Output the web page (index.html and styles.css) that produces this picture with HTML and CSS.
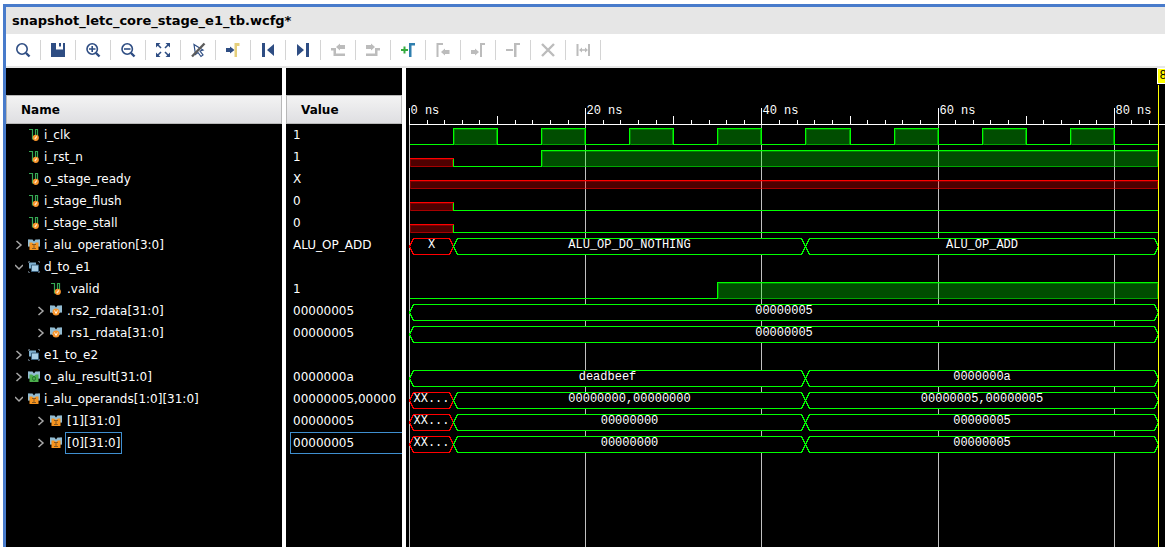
FILE: index.html
```html
<!DOCTYPE html>
<html lang="en">
<head>
    <meta charset="UTF-8">
    <title>snapshot_letc_core_stage_e1_tb.wcfg*</title>
    <link rel="stylesheet" href="styles.css">
</head>
<body>

<svg class="sprite" aria-hidden="true">
    <symbol id="right" viewBox="0 0 8 10"><path d="M1.500 1l4.500 4-4.500 4" fill="none" stroke="#a8a8a8" stroke-width="1.5"/></symbol>
    <symbol id="down" viewBox="0 0 8 10"><path d="M0 3l4 4 4-4" fill="none" stroke="#a8a8a8" stroke-width="1.5"/></symbol>
    <symbol id="wire" viewBox="0 0 12 12">
        <path d="M1 .5h3.500v9.500h2M7.500 8V.5h2V7" fill="none" stroke="#35a853" stroke-width="1.200"/>
        <circle cx="7.800" cy="8.800" r="3.100" fill="#f9952b"/>
        <path d="M6.800 10.200l2-2.800" stroke="#ffe9cc" stroke-width="1.200"/>
    </symbol>
    <symbol id="bus" viewBox="0 0 12 12">
        <path d="M0 .5h4.500l1.500 2 1.500-2H12V8H0z" fill="#93bcd2"/>
        <path d="M0 .5h2M10 .5h2M0 7.500h2M10 7.500h2" stroke="#56707e"/>
    </symbol>
    <symbol id="bus-in" viewBox="0 0 12 12">
        <use href="#bus"/>
        <path d="M1.500 3.500H4l2 1.500 2-1.500h2.500v7.500h-9z" fill="#f7941e"/>
        <path d="M4 5.500h4M6 5.500v4M4 9.500h4" stroke="#8a5a20" fill="none"/>
    </symbol>
    <symbol id="bus-out" viewBox="0 0 12 12">
        <use href="#bus"/>
        <path d="M1.500 3.500H4l2 1.500 2-1.500h2.500v7.500h-9z" fill="#4cae4c"/>
        <ellipse cx="6" cy="7.500" rx="1.500" ry="2" stroke="#1f6e2c" fill="none"/>
    </symbol>
    <symbol id="bus-var" viewBox="0 0 12 12">
        <use href="#bus"/>
        <circle cx="6" cy="7" r="3.500" fill="#f9952b"/>
        <path d="M4.500 5.500L6 8.500l1.500-3" stroke="#fff0dc" fill="none"/>
    </symbol>
    <symbol id="group" viewBox="0 0 12 12">
        <path d="M.5 2V.5H2M10 .5h1.500V2M.5 10v1.500H2M10 11.500h1.500V10" fill="none" stroke="#55606a"/>
        <path d="M1 1.500h7v6H1z" fill="#7fb0cf"/>
        <path d="M3.500 4h7v6.500h-7z" fill="#a9cfe6" stroke="#3d6482"/>
    </symbol>
</svg>

<div class="window">
    <h1 class="title">snapshot_letc_core_stage_e1_tb.wcfg*</h1>

    <div class="toolbar">
        <button class="tool" aria-label="Search"><svg viewBox="0 0 16 16"><circle cx="7" cy="7" r="5.200" class="line"/><path d="M11 11l3.500 3.500" class="line thick"/></svg></button>
        <button class="tool" aria-label="Save"><svg viewBox="0 0 16 16"><path d="M1 1h5v6.500h7V1h2v14H1z"/><path d="M9 1h2v3.500H9z"/></svg></button>
        <button class="tool" aria-label="Zoom in"><svg viewBox="0 0 16 16"><circle cx="7.200" cy="7" r="5.200" class="line"/><path d="M11 11l3.500 3.500" class="line thick"/><path d="M4 7h6.500M7.200 4v6" class="line"/></svg></button>
        <button class="tool" aria-label="Zoom out"><svg viewBox="0 0 16 16"><circle cx="7.200" cy="7" r="5.200" class="line"/><path d="M11 11l3.500 3.500" class="line thick"/><path d="M4 7h6.500" class="line"/></svg></button>
        <button class="tool" aria-label="Zoom fit"><svg viewBox="0 0 16 16"><path d="M1 1h4.500L1 5.500zM15 1v4.500L10.500 1zM1 15v-4.500L5.500 15zM15 15h-4.500l4.500-4.500z"/><path d="M2 2l4 4M14 2l-4 4M2 14l4-4M14 14l-4-4" class="line"/></svg></button>
        <button class="tool" aria-label="Toggle cursor"><svg viewBox="0 0 16 16"><path d="M4 2.500l9 5.500-3 1 3 4-2 1.500-3-4-2.500 2z" class="line thin"/><path d="M2 14.500L14.500 1.500" stroke="#5c5c5c" stroke-width="2.400"/></svg></button>
        <button class="tool" aria-label="Go to cursor"><svg viewBox="0 0 16 16"><path d="M1 6h4V4.500l4.500 3.500L5 11.500V10H1z"/><path d="M9.500 15V1h5v3H12v11z" fill="#e5cf7c"/></svg></button>
        <button class="tool" aria-label="Go to start"><svg viewBox="0 0 16 16"><path d="M2 1h3v14H2zM14 2v12L7 8z"/></svg></button>
        <button class="tool" aria-label="Go to end"><svg viewBox="0 0 16 16"><path d="M11 1h3v14h-3zM2 2v12l7-6z"/></svg></button>
        <button class="tool" aria-label="Previous transition" disabled><svg viewBox="0 0 16 16"><path d="M1 6h5v5.500h9V14H3.500V8.500H1z"/><path d="M6 5l4-3.500V3h5v4h-5v1.500z"/></svg></button>
        <button class="tool" aria-label="Next transition" disabled><svg viewBox="0 0 16 16"><path d="M15 6h-5v5.500H1V14h11.500V8.500H15z"/><path d="M10 5L6 1.500V3H1v4h5v1.500z"/></svg></button>
        <button class="tool" aria-label="Add marker"><svg viewBox="0 0 16 16"><path d="M1 8h7M4.500 4.500v7" stroke="#35ab3f" stroke-width="2"/><path d="M9 15V1h6v2.500h-3.500V15z" fill="#2f7fae"/></svg></button>
        <button class="tool" aria-label="Previous marker" disabled><svg viewBox="0 0 16 16"><path d="M1.500 15V1H8v2H3.500v12zM6 10l4-3.500V8h4.500v4H10v1.500z"/></svg></button>
        <button class="tool" aria-label="Next marker" disabled><svg viewBox="0 0 16 16"><path d="M10 15V1h5v2h-3v12zM9 10L5 6.500V8H1v4h4v1.500z"/></svg></button>
        <button class="tool" aria-label="Remove marker" disabled><svg viewBox="0 0 16 16"><path d="M9 15V1h6v2h-3.500v12zM1 7h7v2H1z"/></svg></button>
        <button class="tool" aria-label="Delete" disabled><svg viewBox="0 0 16 16"><path d="M2 2l12 12M14 2L2 14" class="line thick"/></svg></button>
        <button class="tool" aria-label="Swap cursors" disabled><svg viewBox="0 0 16 16"><path d="M1.500 2h2v12h-2zM13 2h2v12h-2zM4 8l3-2.500V7.300h3V5.500L13 8l-3 2.500V8.700H7v1.800z"/></svg></button>
    </div>

    <main class="panes">
        <section class="pane names">
            <table>
                <tr><th>Name</th></tr>
                <tr><td><div class="node"><i class="gap"></i><svg class="kind"><use href="#wire"/></svg><span>i_clk</span></div></td></tr>
                <tr><td><div class="node"><i class="gap"></i><svg class="kind"><use href="#wire"/></svg><span>i_rst_n</span></div></td></tr>
                <tr><td><div class="node"><i class="gap"></i><svg class="kind"><use href="#wire"/></svg><span>o_stage_ready</span></div></td></tr>
                <tr><td><div class="node"><i class="gap"></i><svg class="kind"><use href="#wire"/></svg><span>i_stage_flush</span></div></td></tr>
                <tr><td><div class="node"><i class="gap"></i><svg class="kind"><use href="#wire"/></svg><span>i_stage_stall</span></div></td></tr>
                <tr><td><div class="node"><button class="gap" aria-label="Expand"><svg><use href="#right"/></svg></button><svg class="kind"><use href="#bus-in"/></svg><span>i_alu_operation[3:0]</span></div></td></tr>
                <tr><td><div class="node"><button class="gap" aria-label="Collapse"><svg><use href="#down"/></svg></button><svg class="kind"><use href="#group"/></svg><span>d_to_e1</span></div></td></tr>
                <tr><td><div class="node child"><i class="gap"></i><svg class="kind"><use href="#wire"/></svg><span>.valid</span></div></td></tr>
                <tr><td><div class="node child"><button class="gap" aria-label="Expand"><svg><use href="#right"/></svg></button><svg class="kind"><use href="#bus-var"/></svg><span>.rs2_rdata[31:0]</span></div></td></tr>
                <tr><td><div class="node child"><button class="gap" aria-label="Expand"><svg><use href="#right"/></svg></button><svg class="kind"><use href="#bus-var"/></svg><span>.rs1_rdata[31:0]</span></div></td></tr>
                <tr><td><div class="node"><button class="gap" aria-label="Expand"><svg><use href="#right"/></svg></button><svg class="kind"><use href="#group"/></svg><span>e1_to_e2</span></div></td></tr>
                <tr><td><div class="node"><button class="gap" aria-label="Expand"><svg><use href="#right"/></svg></button><svg class="kind"><use href="#bus-out"/></svg><span>o_alu_result[31:0]</span></div></td></tr>
                <tr><td><div class="node"><button class="gap" aria-label="Collapse"><svg><use href="#down"/></svg></button><svg class="kind"><use href="#bus-in"/></svg><span>i_alu_operands[1:0][31:0]</span></div></td></tr>
                <tr><td><div class="node child"><button class="gap" aria-label="Expand"><svg><use href="#right"/></svg></button><svg class="kind"><use href="#bus-in"/></svg><span>[1][31:0]</span></div></td></tr>
                <tr><td><div class="node child"><button class="gap" aria-label="Expand"><svg><use href="#right"/></svg></button><svg class="kind"><use href="#bus-in"/></svg><span class="selected">[0][31:0]</span></div></td></tr>
            </table>
        </section>

        <section class="pane values">
            <table>
                <tr><th>Value</th></tr>
                <tr><td><div class="value">1</div></td></tr>
                <tr><td><div class="value">1</div></td></tr>
                <tr><td><div class="value">X</div></td></tr>
                <tr><td><div class="value">0</div></td></tr>
                <tr><td><div class="value">0</div></td></tr>
                <tr><td><div class="value">ALU_OP_ADD</div></td></tr>
                <tr><td><div class="value"></div></td></tr>
                <tr><td><div class="value">1</div></td></tr>
                <tr><td><div class="value">00000005</div></td></tr>
                <tr><td><div class="value">00000005</div></td></tr>
                <tr><td><div class="value"></div></td></tr>
                <tr><td><div class="value">0000000a</div></td></tr>
                <tr><td><div class="value">00000005,00000</div></td></tr>
                <tr><td><div class="value">00000005</div></td></tr>
                <tr><td><div class="value selected">00000005</div></td></tr>
            </table>
        </section>

        <section class="pane wave">
            <svg id="wave"></svg>
        </section>
    </main>
</div>

<script src="wave.js"></script>
</body>
</html>
```
FILE: styles.css
```css
* {
    box-sizing: border-box;
}

html, body {
    height: 100%;
    margin: 0;
}

body {
    background: #fff;
    color: #fff;
    font-family: "DejaVu Sans", sans-serif;
    font-size: 12px;
    padding: 4px 0 0 3px;
    overflow: hidden;
}

.sprite {
    position: absolute;
    width: 0;
    height: 0;
}

.window {
    height: 100%;
    display: flex;
    flex-direction: column;
    border-top: 3px solid #487bcb;
    border-left: 3px solid #487bcb;
}

.title {
    margin: 0;
    padding: 0 6px;
    background: #e6e6e6;
    color: #000;
    font-size: 13px;
    line-height: 27px;
}

/* toolbar */

.toolbar {
    display: flex;
    padding: 6px 0;
    background: #fff;
    border-bottom: 2px solid #e6e6e6;
}

.tool {
    display: flex;
    align-items: center;
    justify-content: center;
    width: 35px;
    height: 20px;
    padding: 0;
    border: none;
    border-right: 1px solid #d4d4d4;
    background: none;
    color: #2e4d83;
}

.tool:disabled {
    color: #bcbcbc;
}

.tool svg {
    width: 16px;
    height: 16px;
    fill: currentColor;
}

.tool .line {
    fill: none;
    stroke: currentColor;
    stroke-width: 1.6;
}

.tool .thick {
    stroke-width: 2.4;
}

.tool .thin {
    stroke-width: 1.2;
}

/* panes */

.panes {
    flex: 1;
    min-height: 0;
    display: flex;
    gap: 4px;
}

.pane {
    background: #000;
    overflow: hidden;
}

.names {
    width: 276px;
    padding-top: 27px;
}

.values {
    width: 116px;
    padding-top: 27px;
}

.wave {
    flex: 1;
    min-width: 0;
}

table {
    width: 100%;
    table-layout: fixed;
    border-collapse: separate;
    border-spacing: 0;
}

th {
    height: 29px;
    padding: 0 14px;
    border: 1px solid #b8b8b8;
    background: linear-gradient(#f3f3f3, #dfdfe2);
    color: #000;
    text-align: left;
}

td {
    height: 22px;
    padding: 0;
}

.node {
    display: flex;
    align-items: center;
    height: 22px;
    padding-left: 7px;
}

.child {
    padding-left: 29px;
}

.gap {
    display: flex;
    width: 12px;
    height: 12px;
    padding: 0;
    border: none;
    background: none;
}

.gap svg {
    width: 8px;
    height: 10px;
    margin: auto;
}

.kind {
    width: 12px;
    height: 12px;
    margin: 0 2px 0 3px;
}

.node span {
    height: 22px;
    line-height: 21px;
    padding: 0 1px;
    border: 1px solid transparent;
}

.child span {
    margin-left: 1px;
}

.value {
    height: 22px;
    margin-left: 4px;
    padding-left: 2px;
    border: 1px solid transparent;
    border-right: none;
    line-height: 21px;
    white-space: nowrap;
}

.node .selected, .value.selected {
    border-color: #3f8fd0;
}

/* waveform */

#wave {
    display: block;
    width: 100%;
    height: 100%;
    font-family: "Liberation Mono", monospace;
    font-size: 12px;
    fill: #fff;
}

#wave path, #wave rect {
    shape-rendering: crispEdges;
}

.axis {
    stroke: #fff;
    fill: none;
}

.grid {
    stroke: #c0c0c0;
}

.one, .unknown {
    fill-opacity: .3;
    stroke-opacity: .5;
}

.one {
    fill: #0f0;
    stroke: #0f0;
}

.unknown {
    fill: #f00;
    stroke: #f00;
}

.level {
    fill: none;
    stroke: #0f0;
}

.level.bad {
    stroke: #f00;
}

.bus {
    fill: #000;
    stroke: #0f0;
}

.bus.bad {
    stroke: #f00;
}

.bus-text {
    text-anchor: middle;
}

.cursor {
    stroke: #ff0;
}

.flag {
    fill: #ff0;
    stroke: #fff;
}

.flag-text {
    fill: #000;
}
```
FILE: wave.js
```js
const svg = document.getElementById('wave');
const NS = 8.81;      // pixels per ns
const LEFT = 3;
const AXIS = 56;
const ROW = 22;
const END = 85;

let out = '';

function px(t) {
    return Math.round(LEFT + t * NS) + 0.5;
}

function path(cls, d) {
    out += `<path class="${cls}" d="${d}"/>`;
}

function drawGrid() {
    path('axis', `M${LEFT} ${AXIS + 0.5}H4000`);
    for (let t = 0; t <= 400; t += 2) {
        const x = px(t);
        let top = AXIS - 4;
        if (t % 10 === 0) top = AXIS - 8;
        if (t % 20 === 0) top = AXIS - 16;
        path('axis', `M${x} ${top}V${AXIS}`);
        if (t % 20 === 0 && t <= END) {
            path('grid', `M${x} ${AXIS + 1}V4000`);
            out += `<text x="${x + 1}" y="${AXIS - 10}">${t} ns</text>`;
        }
    }
}

// segments are [start, value], value is 0, 1 or 'x'
function drawBit(row, segments) {
    const y = AXIS + row * ROW;
    const low = y + 20.5;
    let last = null;
    segments.forEach(([start, v], i) => {
        const a = px(start);
        const b = px(i + 1 < segments.length ? segments[i + 1][0] : END);
        const top = v === 1 ? y + 4.5 : v === 'x' ? y + 12.5 : low;
        if (v !== 0) {
            out += `<rect class="${v === 1 ? 'one' : 'unknown'}" x="${a + 1}" y="${top + 1}" width="${b - a - 2}" height="${low - top - 1}"/>`;
        }
        path(v === 'x' ? 'level bad' : 'level', `M${a} ${last === null ? top : last}V${top}H${b}`);
        last = top;
    });
}

// segments are [start, text]
function drawBus(row, segments) {
    const y = AXIS + row * ROW;
    const top = y + 4.5, mid = y + 12.5, low = y + 20.5;
    segments.forEach(([start, text], i) => {
        const a = px(start);
        const b = px(i + 1 < segments.length ? segments[i + 1][0] : END);
        const bad = text[0] === 'X' ? ' bad' : '';
        path('bus' + bad, `M${a} ${mid}L${a + 4} ${top}H${b - 4}L${b} ${mid}L${b - 4} ${low}H${a + 4}Z`);
        out += `<text class="bus-text" x="${(a + b) / 2}" y="${y + 14}">${text}</text>`;
    });
}

drawGrid();

const clk = [[0, 0]];
for (let t = 5; t < END; t += 5) clk.push([t, t % 10 === 5 ? 1 : 0]);
drawBit(0, clk);
drawBit(1, [[0, 'x'], [5, 0], [15, 1]]);
drawBit(2, [[0, 'x']]);
drawBit(3, [[0, 'x'], [5, 0]]);
drawBit(4, [[0, 'x'], [5, 0]]);
drawBus(5, [[0, 'X'], [5, 'ALU_OP_DO_NOTHING'], [45, 'ALU_OP_ADD']]);
drawBit(7, [[0, 0], [35, 1]]);
drawBus(8, [[0, '00000005']]);
drawBus(9, [[0, '00000005']]);
drawBus(11, [[0, 'deadbeef'], [45, '0000000a']]);
drawBus(12, [[0, 'XX...'], [5, '00000000,00000000'], [45, '00000005,00000005']]);
drawBus(13, [[0, 'XX...'], [5, '00000000'], [45, '00000005']]);
drawBus(14, [[0, 'XX...'], [5, '00000000'], [45, '00000005']]);

// time cursor
path('cursor', `M${px(END)} 17V4000`);
out += `<rect class="flag" x="${px(END) - 1}" y="0.5" width="70" height="15"/>`;
out += `<text class="flag-text" x="${px(END) + 1}" y="11">85.000 ns</text>`;

svg.innerHTML = out;
```
